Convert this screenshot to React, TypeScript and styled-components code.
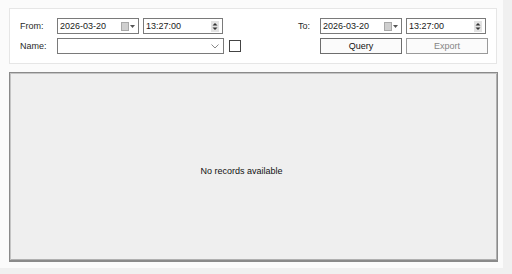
import * as React from "react";
import styled, { createGlobalStyle } from "styled-components";

const GlobalStyle = createGlobalStyle`
    html, body {
        margin: 0;
        padding: 0;
        background: #fafafa;
        font-family: "Liberation Sans", Arial, sans-serif;
        font-size: 9px;
        color: #222;
    }
`;

const Page = styled.div`
    width: 512px;
    height: 274px;
    box-sizing: border-box;
    display: flex;
    background: #f0f0f0;
`;

const Main = styled.div`
    width: 503px;
    height: 268px;
    background: #fbfbfb;
    box-sizing: border-box;
    padding: 8px 6px 0 9px;
    display: flex;
    flex-direction: column;
    gap: 8px;
`;

const FilterPanel = styled.section`
    height: 56px;
    box-sizing: border-box;
    border: 1px solid #e6e6e6;
    background: #ffffff;
    display: grid;
    grid-template-columns: 37px 86px 81px 7px 1fr 23px 86px 81px;
    grid-template-rows: 16px 16px;
    row-gap: 4px;
    align-content: start;
    padding: 9px 9px 0 10px;
`;

const Label = styled.div<{ $right?: boolean }>`
    display: flex;
    align-items: center;
    justify-content: ${p => (p.$right ? "flex-end" : "flex-start")};
    padding-right: ${p => (p.$right ? "10px" : "0")};
    color: #2a2a2a;
`;

const Field = styled.div<{ $w: number }>`
    box-sizing: border-box;
    width: ${p => p.$w}px;
    height: 16px;
    border: 1px solid #7a7a7a;
    background: #fff;
    display: flex;
    align-items: center;
    padding-left: 2px;
    color: #1a1a1a;
`;

const Combo = styled(Field)`
    grid-column: span 2;
`;

const FieldText = styled.span`
    flex: 1;
`;

const CalIcon = styled.span`
    display: flex;
    align-items: center;
    gap: 1px;
    margin-right: 3px;
`;

const Spinner = styled.span`
    width: 8px;
    height: 11px;
    margin-right: 3px;
    background: #e3e3e3;
    display: flex;
    flex-direction: column;
    align-items: center;
    justify-content: center;
`;

const Check = styled.div`
    width: 10px;
    height: 10px;
    border: 1px solid #444;
    background: #fff;
    margin: 2px 0 0 5px;
`;

const Button = styled.div<{ $disabled?: boolean }>`
    box-sizing: border-box;
    width: 82px;
    height: 16px;
    border: 1px solid ${p => (p.$disabled ? "#9a9a9a" : "#6d6d6d")};
    background: #fbfbfb;
    color: ${p => (p.$disabled ? "#858585" : "#111")};
    display: flex;
    align-items: center;
    justify-content: center;
`;

const GridBox = styled.section`
    width: 489px;
    height: 190px;
    box-sizing: border-box;
    border: 1px solid #8a8a8a;
    border-bottom-width: 2px;
    box-shadow: inset 1px 1px 0 #c4c4c4, inset -1px -1px 0 #b0b0b0;
    background: #efefef;
    display: flex;
    align-items: center;
    justify-content: center;
    color: #111;
`;

const Empty = styled.div`
    margin-top: 9px;
    margin-left: -24px;
`;

const DateField: React.FC<{ value: string }> = ({ value }) => (
    <Field $w={82}>
        <FieldText>{value}</FieldText>
        <CalIcon>
            <svg width="8" height="9" viewBox="0 0 8 9">
                <rect x="0.5" y="0.5" width="7" height="8" fill="#cfcfcf" stroke="#a8a8a8" />
            </svg>
            <svg width="5" height="3" viewBox="0 0 5 3">
                <path d="M0 0 L5 0 L2.5 3 Z" fill="#555" />
            </svg>
        </CalIcon>
    </Field>
);

const TimeField: React.FC<{ value: string }> = ({ value }) => (
    <Field $w={80}>
        <FieldText>{value}</FieldText>
        <Spinner>
            <svg width="6" height="9" viewBox="0 0 6 9">
                <path d="M0.5 3.5 L3 1 L5.5 3.5 Z" fill="#333" />
                <path d="M0.5 5.5 L3 8 L5.5 5.5 Z" fill="#333" />
            </svg>
        </Spinner>
    </Field>
);

export default function App() {
    return (
        <Page>
            <GlobalStyle />
            <Main>
                <FilterPanel>
                    <Label>From:</Label>
                    <DateField value="2026-03-20" />
                    <TimeField value="13:27:00" />
                    <div />
                    <div />
                    <Label $right>To:</Label>
                    <DateField value="2026-03-20" />
                    <TimeField value="13:27:00" />

                    <Label>Name:</Label>
                    <Combo $w={167}>
                        <FieldText />
                        <svg width="8" height="5" viewBox="0 0 8 5" style={{ marginRight: 4 }}>
                            <path d="M0.5 0.5 L4 4 L7.5 0.5" fill="none" stroke="#888" />
                        </svg>
                    </Combo>
                    <Check />
                    <div />
                    <div />
                    <Button>Query</Button>
                    <Button $disabled>Export</Button>
                </FilterPanel>
                <GridBox>
                    <Empty>No records available</Empty>
                </GridBox>
            </Main>
        </Page>
    );
}
